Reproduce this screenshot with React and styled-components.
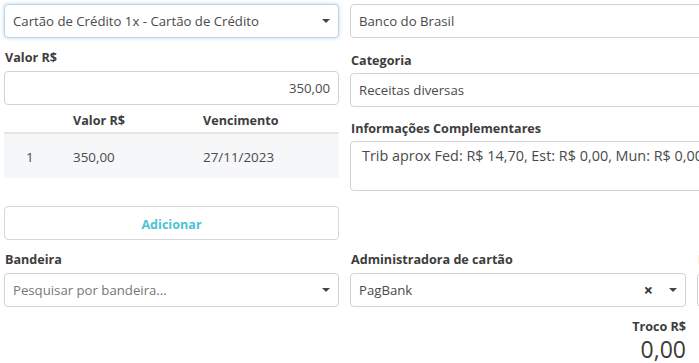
import React from "react";
import styled, { createGlobalStyle } from "styled-components";

const GlobalStyle = createGlobalStyle`
  html, body {
    margin: 0;
    padding: 0;
    background: #fff;
    overflow: hidden;
  }
  body {
    font-family: "Open Sans", "Liberation Sans", sans-serif;
    color: #444;
  }
`;

const Page = styled.div`
  padding: 4px;
  width: 1200px;
`;

const TopGrid = styled.div`
  display: grid;
  grid-template-columns: 335px 500px;
  column-gap: 11px;
  align-items: start;
`;

const Column = styled.div`
  display: flex;
  flex-direction: column;
`;

const Label = styled.label`
  display: block;
  font-size: 12.6px;
  font-weight: 700;
  color: #3d3d3d;
  line-height: 16px;
  margin: ${(p) => p.$top || 14}px 0 ${(p) => p.$bottom || 5}px 1px;
`;

const Box = styled.div`
  box-sizing: border-box;
  height: 34px;
  border: 1px solid ${(p) => (p.$focus ? "#b9d3ea" : "#d2d2d2")};
  border-radius: 4px;
  background: #fff;
  display: flex;
  align-items: center;
  padding: 0 8px 0 8px;
  font-size: 13.2px;
  color: ${(p) => (p.$placeholder ? "#777" : "#4a4a4a")};
  justify-content: ${(p) => (p.$right ? "flex-end" : "flex-start")};
  box-shadow: ${(p) => (p.$focus ? "0 0 4px rgba(120, 170, 220, 0.45)" : "none")};
`;

const BoxText = styled.span`
  flex: ${(p) => (p.$grow ? 1 : "none")};
  white-space: nowrap;
`;

const TextArea = styled.div`
  box-sizing: border-box;
  height: 50px;
  border: 1px solid #d2d2d2;
  border-radius: 4px;
  padding: 4px 11px;
  font-size: 14.4px;
  color: #4a4a4a;
  white-space: nowrap;
  overflow: hidden;
`;

const Caret = styled.span`
  width: 0;
  height: 0;
  border-left: 4px solid transparent;
  border-right: 4px solid transparent;
  border-top: 4px solid #444;
  margin-left: 16px;
`;

const Clear = styled.span`
  font-size: 16px;
  font-weight: 700;
  color: #333;
  line-height: 1;
`;

const Table = styled.table`
  width: 100%;
  border-collapse: collapse;
  margin-top: 5px;
  font-size: 13.4px;
`;

const Th = styled.th`
  text-align: left;
  font-size: 12.6px;
  font-weight: 700;
  color: #3d3d3d;
  height: 20px;
  padding: 0 0 2px ${(p) => p.$pad || 0}px;
  border-bottom: 2px solid #e6e6e6;
  width: ${(p) => p.$w || "auto"};
`;

const Td = styled.td`
  background: #f6f7f9;
  height: 42px;
  color: #4a4a4a;
  padding: 2px 0 0 ${(p) => p.$pad || 0}px;
`;

const Button = styled.button`
  box-sizing: border-box;
  margin-top: 28px;
  width: 100%;
  height: 34px;
  background: #fff;
  border: 1px solid #d6d6d6;
  border-radius: 4px;
  color: #4cc4d6;
  font-family: inherit;
  font-size: 12.6px;
  font-weight: 700;
  padding: 2px 0 0;
`;

const BottomGrid = styled.div`
  display: grid;
  grid-template-columns: 335px 336px 336px;
  column-gap: 11px;
`;

const Troco = styled.div`
  grid-column: 2;
  text-align: right;
  margin-top: 12px;
`;

const TrocoLabel = styled.div`
  font-size: 12.6px;
  font-weight: 700;
  color: #3d3d3d;
  line-height: 16px;
`;

const TrocoValue = styled.div`
  font-size: 23px;
  color: #3a3a3a;
  line-height: 28px;
`;

export default function App() {
  return (
    <Page>
      <GlobalStyle />
      <TopGrid>
        <Column>
          <Box $focus>
            <BoxText $grow>Cartão de Crédito 1x - Cartão de Crédito</BoxText>
            <Caret />
          </Box>
          <Label $top={12} $bottom={5}>Valor R$</Label>
          <Box $right>
            <BoxText>350,00</BoxText>
          </Box>
          <Table>
            <thead>
              <tr>
                <Th $w="69px" />
                <Th $w="130px">Valor R$</Th>
                <Th>Vencimento</Th>
              </tr>
            </thead>
            <tbody>
              <tr>
                <Td $pad={22}>1</Td>
                <Td>350,00</Td>
                <Td>27/11/2023</Td>
              </tr>
            </tbody>
          </Table>
          <Button>Adicionar</Button>
        </Column>
        <Column>
          <Box>
            <BoxText>Banco do Brasil</BoxText>
          </Box>
          <Label $top={15} $bottom={4}>Categoria</Label>
          <Box>
            <BoxText>Receitas diversas</BoxText>
          </Box>
          <Label $top={14} $bottom={4}>Informações Complementares</Label>
          <TextArea>Trib aprox Fed: R$ 14,70, Est: R$ 0,00, Mun: R$ 0,00</TextArea>
        </Column>
      </TopGrid>
      <BottomGrid>
        <Column>
          <Label $top={12} $bottom={5}>Bandeira</Label>
          <Box $placeholder>
            <BoxText $grow>Pesquisar por bandeira...</BoxText>
            <Caret />
          </Box>
        </Column>
        <Column>
          <Label $top={12} $bottom={5}>Administradora de cartão</Label>
          <Box>
            <BoxText $grow>PagBank</BoxText>
            <Clear>×</Clear>
            <Caret />
          </Box>
        </Column>
        <Column>
          <Label $top={12} $bottom={5}>Nº de autorização</Label>
          <Box />
        </Column>
        <Troco>
          <TrocoLabel>Troco R$</TrocoLabel>
          <TrocoValue>0,00</TrocoValue>
        </Troco>
      </BottomGrid>
    </Page>
  );
}
